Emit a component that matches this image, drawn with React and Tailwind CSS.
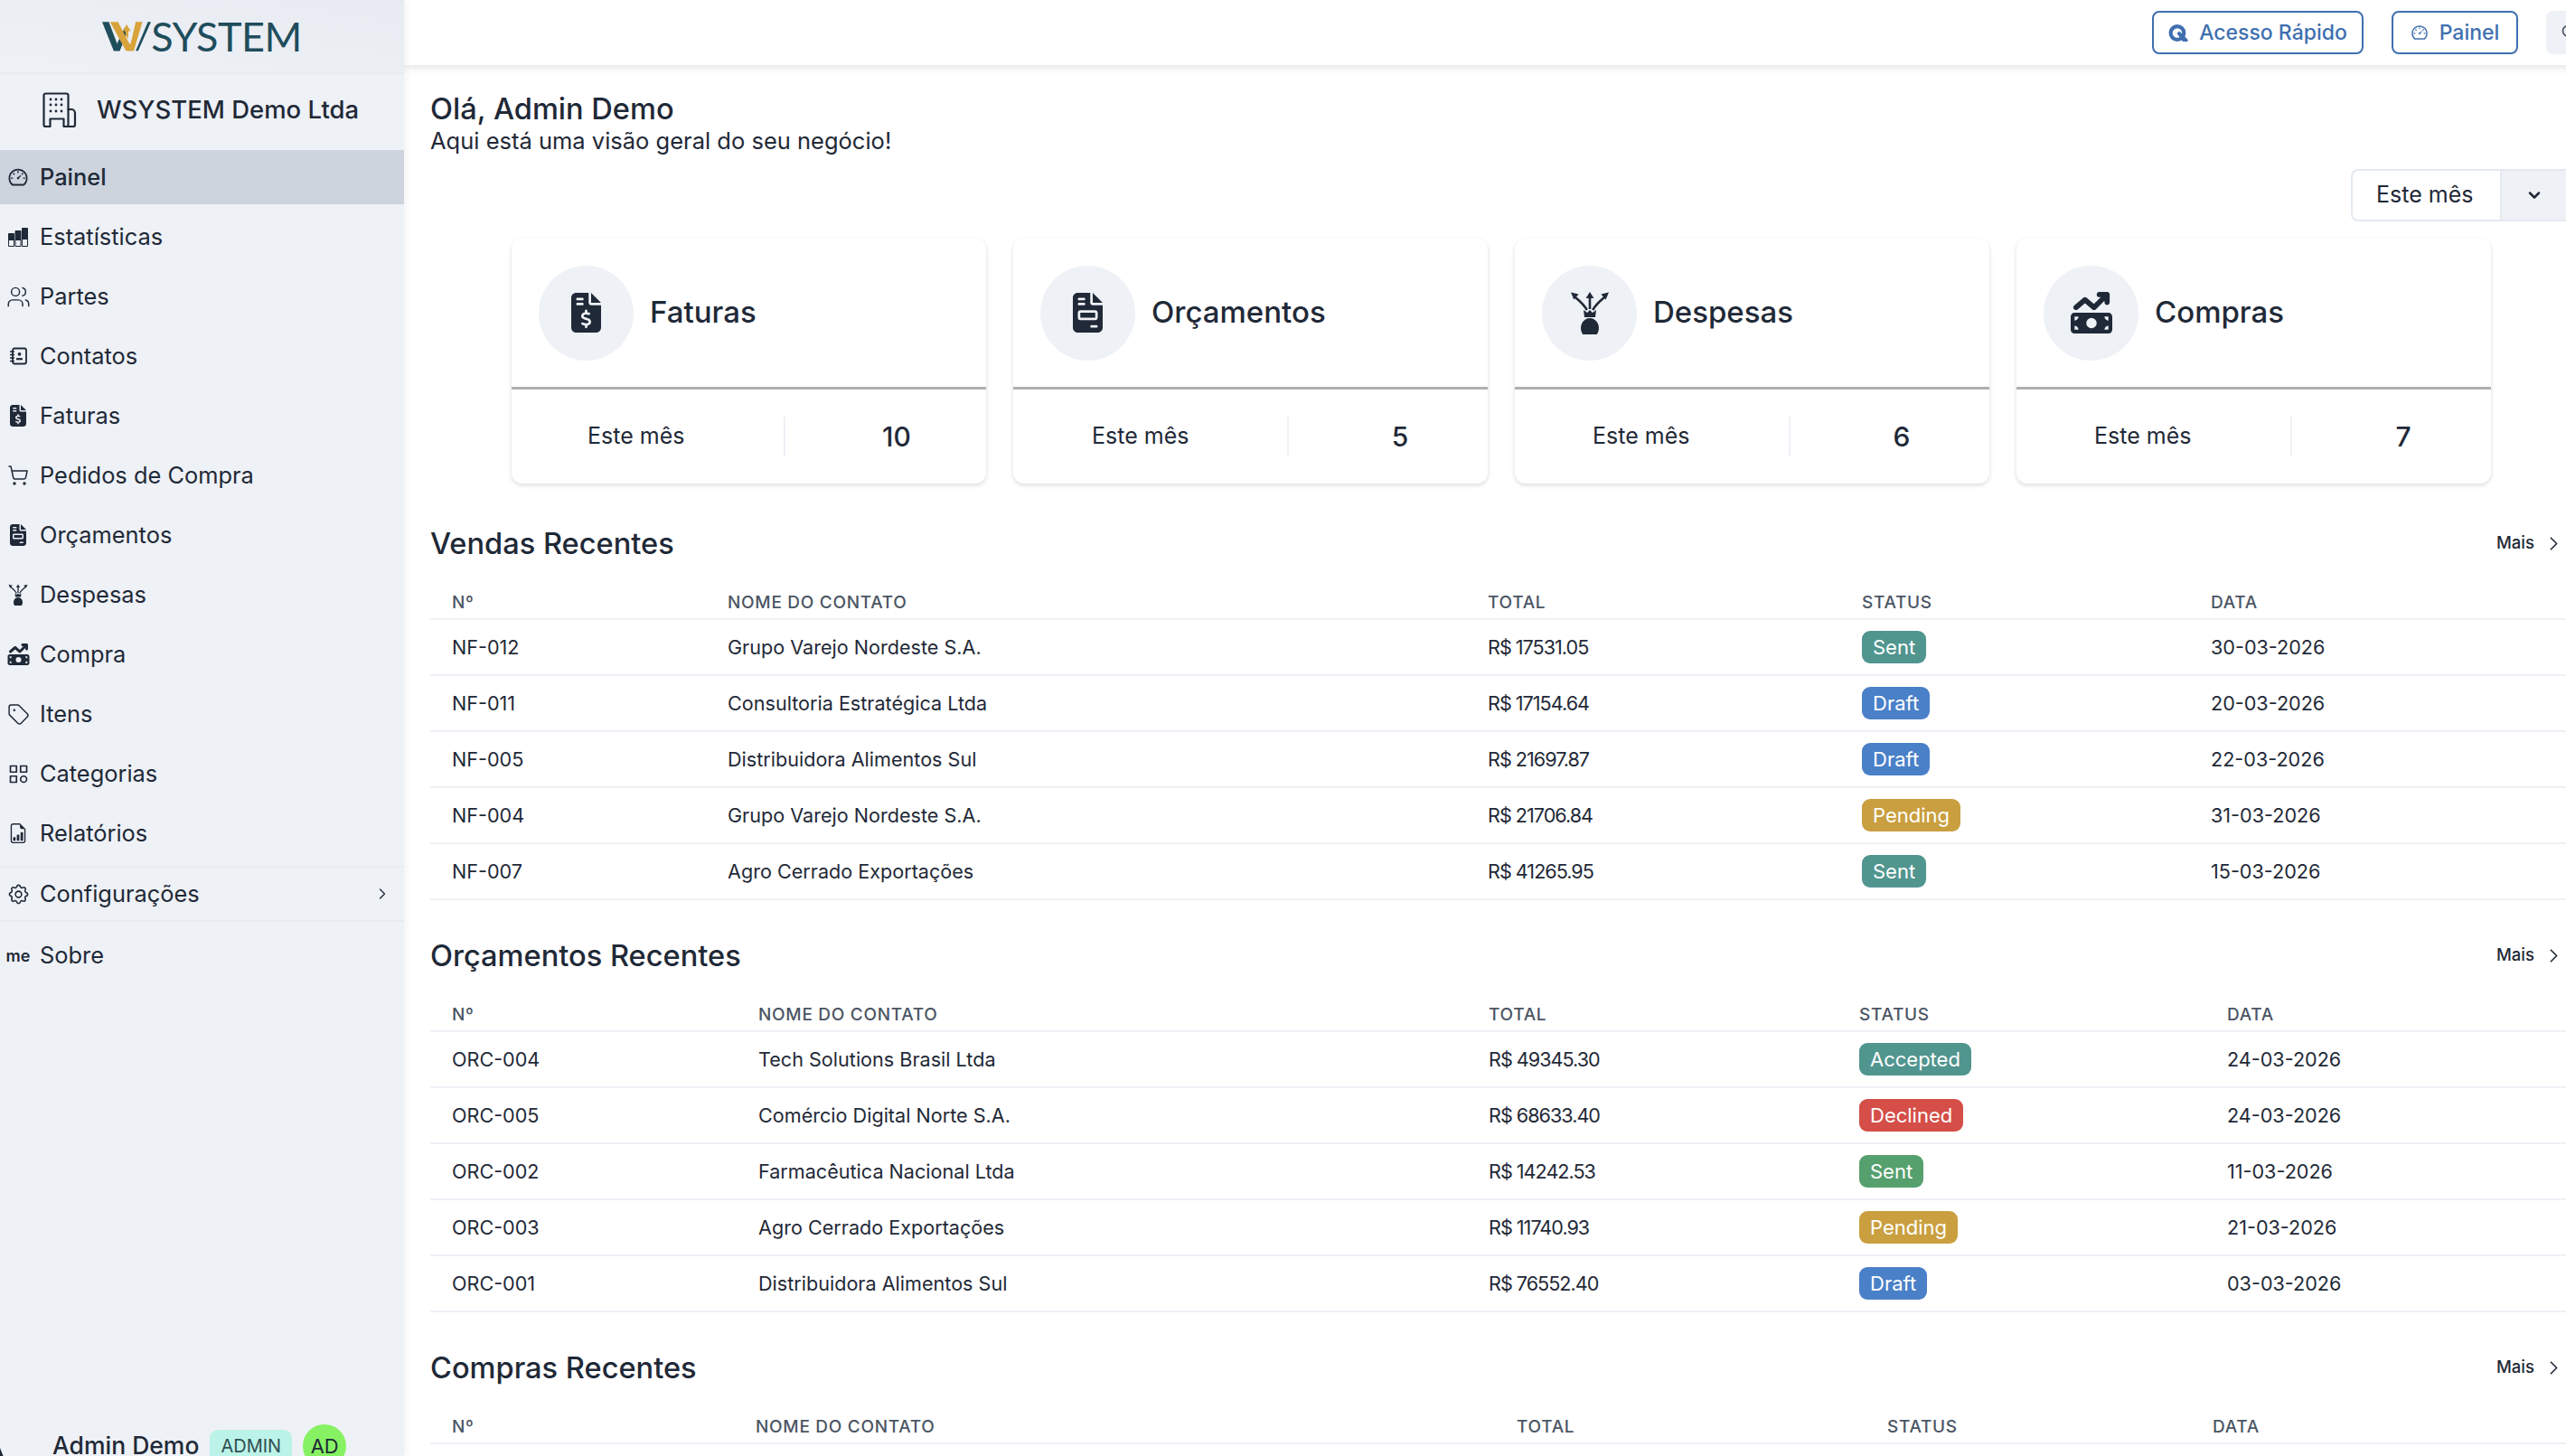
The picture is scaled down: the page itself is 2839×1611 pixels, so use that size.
import { AiOutlineDashboard } from 'react-icons/ai';
import { BsFileEarmarkBarGraph } from 'react-icons/bs';
import { FaFileInvoice, FaFileInvoiceDollar, FaMoneyBillTrendUp } from 'react-icons/fa6';
import { TbCategory, TbChevronDown, TbChevronRight, TbSettings, TbSearch } from 'react-icons/tb';
import { Users, ShoppingCart, Tag } from 'lucide-react';

const font = 'font-["Inter","Liberation_Sans",sans-serif]';

const navItems = [
  { label: 'Painel', icon: <AiOutlineDashboard className="w-[24px] h-[24px]" />, active: true },
  { label: 'Estatísticas', icon: <BarsIcon /> },
  { label: 'Partes', icon: <Users className="w-[27px] h-[27px]" strokeWidth={1.3} /> },
  { label: 'Contatos', icon: <ContactsIcon /> },
  { label: 'Faturas', icon: <FaFileInvoiceDollar className="w-[18px] h-[24px]" /> },
  { label: 'Pedidos de Compra', icon: <ShoppingCart className="w-[24px] h-[24px]" strokeWidth={1.5} /> },
  { label: 'Orçamentos', icon: <FaFileInvoice className="w-[18px] h-[24px]" /> },
  { label: 'Despesas', icon: <ExpenseIcon className="w-[24px] h-[24px]" /> },
  { label: 'Compra', icon: <FaMoneyBillTrendUp className="w-[25px] h-[24px]" /> },
  { label: 'Itens', icon: <Tag className="w-[25px] h-[25px]" strokeWidth={1.4} /> },
  { label: 'Categorias', icon: <TbCategory className="w-[27px] h-[27px]" strokeWidth={1.5} /> },
  { label: 'Relatórios', icon: <BsFileEarmarkBarGraph className="w-[22px] h-[22px]" /> },
];

const cards = [
  { title: 'Faturas', value: '10', col: 'w-[303px] pl-[84px]', icon: <FaFileInvoiceDollar className="w-[33px] h-[44px]" /> },
  { title: 'Orçamentos', value: '5', col: 'w-[308px] pl-[87px]', icon: <FaFileInvoice className="w-[33px] h-[44px]" /> },
  { title: 'Despesas', value: '6', col: 'w-[308px] pl-[86px]', icon: <ExpenseIcon className="w-[48px] h-[48px]" /> },
  { title: 'Compras', value: '7', col: 'w-[308px] pl-[86px]', icon: <FaMoneyBillTrendUp className="w-[48px] h-[46px]" /> },
];

const statusColors = {
  Sent: 'bg-[#51958f]',
  SentGreen: 'bg-[#56a06e]',
  Draft: 'bg-[#4a80c8]',
  Pending: 'bg-[#c99f40]',
  Accepted: 'bg-[#51958f]',
  Declined: 'bg-[#d54e48]',
};

const sales = [
  ['NF-012', 'Grupo Varejo Nordeste S.A.', 'R$ 17531.05', 'Sent', '30-03-2026'],
  ['NF-011', 'Consultoria Estratégica Ltda', 'R$ 17154.64', 'Draft', '20-03-2026'],
  ['NF-005', 'Distribuidora Alimentos Sul', 'R$ 21697.87', 'Draft', '22-03-2026'],
  ['NF-004', 'Grupo Varejo Nordeste S.A.', 'R$ 21706.84', 'Pending', '31-03-2026'],
  ['NF-007', 'Agro Cerrado Exportações', 'R$ 41265.95', 'Sent', '15-03-2026'],
];

const quotes = [
  ['ORC-004', 'Tech Solutions Brasil Ltda', 'R$ 49345.30', 'Accepted', '24-03-2026'],
  ['ORC-005', 'Comércio Digital Norte S.A.', 'R$ 68633.40', 'Declined', '24-03-2026'],
  ['ORC-002', 'Farmacêutica Nacional Ltda', 'R$ 14242.53', 'SentGreen', '11-03-2026'],
  ['ORC-003', 'Agro Cerrado Exportações', 'R$ 11740.93', 'Pending', '21-03-2026'],
  ['ORC-001', 'Distribuidora Alimentos Sul', 'R$ 76552.40', 'Draft', '03-03-2026'],
];

function BarsIcon() {
  return (
    <svg viewBox="0 0 22 21" className="w-[22px] h-[21px]" fill="currentColor">
      <path d="M.5 6.500h6V14h-6z M8 3.500h6V14H8z M15.500.5h6V13h-6z" />
      <path d="M.5 6.500h6v14h-6z M8 3.500h6v17H8z M15.500.5h6v20h-6z" fill="none" stroke="currentColor" strokeWidth="1" />
    </svg>
  );
}

function ContactsIcon() {
  return (
    <svg viewBox="0 0 20 20" className="w-[20px] h-[20px]" fill="none" stroke="currentColor" strokeWidth="1.800">
      <rect x="4" y="1.500" width="15" height="17" rx="2" />
      <path d="M1 5h5 M1 8.500h5 M1 12h5 M1 15.500h5" strokeWidth="1.400" />
      <circle cx="11.500" cy="7.800" r="1.900" fill="currentColor" stroke="none" />
      <path d="M8 13.200h7" strokeWidth="2.200" />
    </svg>
  );
}

function ExpenseIcon({ className }) {
  return (
    <svg viewBox="0 0 24 24" className={className} fill="currentColor">
      <path d="M12 15a5 5.500 0 1 1-.01 0z" />
      <path d="M8.500 10.500l2 1.500 1.500-1.500 1.500 1.500 2-1.500-.5 4h-6z" />
      <path d="M12 10V3.500 M10.400 10.500C9 8 7 6 4 3.500 M13.600 10.500C15 8 17 6 20 3.500" fill="none" stroke="currentColor" strokeWidth="1.300" />
      <path d="M12 .5l2.200 3.500H9.800z M1.500.8l4.300 1-2.600 3z M22.500.8l-4.300 1 2.600 3z" />
    </svg>
  );
}

function BuildingIcon() {
  return (
    <svg viewBox="0 0 38 40" className="w-[38px] h-[40px] text-[#1f2937]" fill="none" stroke="currentColor" strokeWidth="2.200" strokeLinejoin="round" strokeLinecap="round">
      <path d="M1.500 36V3.500a2 2 0 0 1 2-2h23a2 2 0 0 1 2 2V36a2 2 0 0 1-2 2h-3v-8.500h-15V38H3.500a2 2 0 0 1-2-2z" />
      <path d="M28.500 19h3.500a4 4 0 0 1 4 4v13a2 2 0 0 1-2 2h-7" />
      <path d="M9 8h.01 M15 8h.01 M21 8h.01 M9 14h.01 M15 14h.01 M21 14h.01 M9 21h.01 M15 21h.01 M21 21h.01" strokeWidth="2.800" />
    </svg>
  );
}

function QuickIcon() {
  return (
    <svg viewBox="0 0 21 18" className="w-[22px] h-[19px]" fill="currentColor">
      <circle cx="9.500" cy="9" r="7" fill="none" stroke="currentColor" strokeWidth="4" />
      <path d="M9 9.500l2.800-2.300L20.500 16v2H15.500z" />
    </svg>
  );
}

function LogoMark() {
  return (
    <svg viewBox="0 0 160 96" className="w-[54px] h-[33px] shrink-0">
      <path d="M0 0h22l36 95H38z" fill="#1f4d5c" />
      <path d="M38 95h20l24-60-9-16z" fill="#1f4d5c" />
      <path d="M110 95h8L160 0h-10z" fill="#1f4d5c" />
      <path d="M26 0h26l50 95H78z" fill="#d9a33b" />
      <path d="M110 0h22l-28 95H86l12-42z" fill="#d9a33b" />
      <path d="M80 8l14 22h-8l-1 26-8-14-1-12h-8z" fill="#d9a33b" />
    </svg>
  );
}

function StatusBadge({ status }) {
  const label = status === 'SentGreen' ? 'Sent' : status;
  return (
    <span className={`inline-flex items-center h-[36px] px-[12px] rounded-[9px] text-[22px] leading-none text-white ${statusColors[status]}`}>
      {label}
    </span>
  );
}

function RecentTable({ title, cols, headers, rows }) {
  return (
    <section className="h-[456px]">
      <div className="flex items-center justify-between h-[46px]">
        <h2 className="text-[32.600px] font-medium text-[#1f2937]">{title}</h2>
        <button className="flex items-center gap-[9px] text-[18.500px] font-medium text-[#1f2937] pr-[1px]">
          Mais
          <TbChevronRight className="w-[25px] h-[25px]" strokeWidth={1.6} />
        </button>
      </div>
      <div className={`grid ${cols} h-[46px] mt-[16px] items-end border-b-2 border-[#eef1f6] pb-[3px] text-[19px] font-medium tracking-[0.7px] uppercase text-[#4b5563]`}>
        {headers.map((h) => (
          <div key={h} className="pl-[24px]">{h}</div>
        ))}
      </div>
      {rows.map((row) => (
        <div key={row[0]} className={`grid ${cols} h-[62px] items-center border-b-2 border-[#eef1f6] text-[21.600px] text-[#1f2937]`}>
          <div className="pl-[24px]">{row[0]}</div>
          <div className="pl-[24px]">{row[1]}</div>
          <div className="pl-[24px] tracking-[-1px]">{row[2]}</div>
          <div className="pl-[24px]"><StatusBadge status={row[3]} /></div>
          <div className="pl-[24px]">{row[4]}</div>
        </div>
      ))}
    </section>
  );
}

export default function App() {
  const headers = ['Nº', 'Nome do contato', 'Total', 'Status', 'Data'];
  return (
    <div className={`flex h-[1611px] w-[2839px] overflow-hidden bg-white ${font}`}>
      <aside className="relative flex flex-col w-[447px] shrink-0 h-full bg-[#eef1f6] text-[#1f2937] shadow-[2px_0_8px_rgba(0,0,0,0.06)] z-10">
        <div className="flex items-center justify-center h-[82px] border-b-2 border-[#e8ebf0] bg-linear-to-tr from-[#eef1f6] to-[#e8ebf1]">
          <LogoMark />
          <span className="font-['Lato'] text-[45px] leading-none tracking-[-0.5px] text-[#1f4d5c]">SYSTEM</span>
        </div>
        <div className="flex items-center h-[82px] -mt-[1px] pl-[47px] gap-[22px]">
          <BuildingIcon />
          <span className="text-[27.500px] font-medium">WSYSTEM Demo Ltda</span>
        </div>
        <nav className="flex flex-col mt-[3px]">
          {navItems.map((item) => (
            <div key={item.label} className={`flex items-center h-[60px] mb-[6px] last:mb-0 text-[25.400px] ${item.active ? 'bg-[#cdd4de] font-medium' : ''}`}>
              <span className="flex items-center justify-center w-[40px] mr-[4px] shrink-0">{item.icon}</span>
              {item.label}
            </div>
          ))}
          <div className="flex items-center h-[62px] border-y-2 border-[#e8ebf0] text-[25.400px]">
            <span className="flex items-center justify-center w-[40px] mr-[4px] shrink-0"><TbSettings className="w-[27px] h-[27px]" strokeWidth={1.4} /></span>
            Configurações
            <TbChevronRight className="w-[20px] h-[20px] ml-auto mr-[14px]" strokeWidth={1.6} />
          </div>
          <div className="flex items-center h-[74px] text-[25.400px]">
            <span className="flex items-center justify-center w-[40px] mr-[4px] shrink-0 text-[18px] font-semibold">me</span>
            Sobre
          </div>
        </nav>
        <div className="mt-auto flex items-center h-[48px] -mb-[13px] pl-[58px]">
          <span className="text-[26.500px] font-medium">Admin Demo</span>
          <span className="flex items-center h-[36px] ml-[12px] px-[12px] rounded-[9px] bg-[#bcf3e8] text-[20px] text-[#2f4f52]">ADMIN</span>
          <span className="flex items-center justify-center w-[48px] h-[48px] ml-[12px] rounded-full bg-[#86f263] text-[22px]">AD</span>
        </div>
        <svg viewBox="0 0 4 10" className="absolute left-0 bottom-0 w-[4px] h-[10px]">
          <path d="M0 1l3.500 9H0z" fill="#1f2937" />
        </svg>
      </aside>

      <div className="flex flex-col flex-1 min-w-0">
        <header className="flex items-center justify-end shrink-0 h-[72px] gap-[31px] -mr-[42px] bg-white shadow-[0_2px_10px_rgba(0,0,0,0.12)]">
          <button className="flex items-center h-[48px] w-[234px] justify-center gap-[12px] rounded-[8px] border-2 border-[#3f6fb0] text-[23px] font-medium text-[#3f6fb0]">
            <QuickIcon />
            Acesso Rápido
          </button>
          <button className="flex items-center h-[48px] w-[140px] justify-center gap-[12px] rounded-[8px] border-2 border-[#3f6fb0] text-[23px] font-medium text-[#3f6fb0]">
            <AiOutlineDashboard className="w-[20px] h-[20px]" />
            Painel
          </button>
          <button className="flex items-center h-[48px] w-[64px] pl-[16px] rounded-[8px] bg-[#eef1f6] text-[#4b5563]">
            <TbSearch className="w-[20px] h-[20px]" />
          </button>
        </header>

        <main className="flex-1 min-w-0 pl-[29px] text-[#1f2937]">
          <h1 className="text-[32.600px] font-medium leading-[48px] mt-[24px]">Olá, Admin Demo</h1>
          <p className="text-[25.500px] leading-[30px] -mt-[3px]">Aqui está uma visão geral do seu negócio!</p>

          <div className="flex justify-end -mr-[8px] mt-[16px]">
            <div className="flex h-[58px] w-[246px] rounded-l-[8px] border-2 border-r-0 border-[#e4e9f1] overflow-hidden">
              <div className="flex items-center w-[163px] pl-[26px] text-[25px]">Este mês</div>
              <div className="flex items-center flex-1 pl-[26px] bg-[#eef1f6] border-l-2 border-[#e4e9f1]">
                <TbChevronDown className="w-[20px] h-[20px]" strokeWidth={3} />
              </div>
            </div>
          </div>

          <div className="flex gap-[30px] pl-[90px] mt-[19px]">
            {cards.map((card) => (
              <div key={card.title} className="w-[525px] h-[271px] shrink-0 rounded-[12px] bg-white shadow-[0_2px_5px_rgba(0,0,0,0.14)]">
                <div className="flex items-center h-[167px] pl-[30px] gap-[18px] border-b-[3px] border-[#b0b0b0]">
                  <span className="flex items-center justify-center w-[105px] h-[105px] rounded-full bg-[#eef1f6]">{card.icon}</span>
                  <span className="text-[33px] font-medium">{card.title}</span>
                </div>
                <div className="flex items-center h-[104px]">
                  <div className={`flex items-center h-[44px] border-r-2 border-[#eef1f6] text-[25px] ${card.col}`}>Este mês</div>
                  <div className="w-[220px] text-center text-[30px] font-medium">
                    <span className="inline-block w-[246px]">{card.value}</span>
                  </div>
                </div>
              </div>
            ))}
          </div>

          <div className="mt-[43px]">
            <RecentTable title="Vendas Recentes" cols="grid-cols-[305px_841px_414px_386px_1fr]" headers={headers} rows={sales} />
            <RecentTable title="Orçamentos Recentes" cols="grid-cols-[339px_808px_410px_407px_1fr]" headers={headers} rows={quotes} />
            <RecentTable title="Compras Recentes" cols="grid-cols-[336px_842px_410px_360px_1fr]" headers={headers} rows={[]} />
          </div>
        </main>
      </div>
    </div>
  );
}
